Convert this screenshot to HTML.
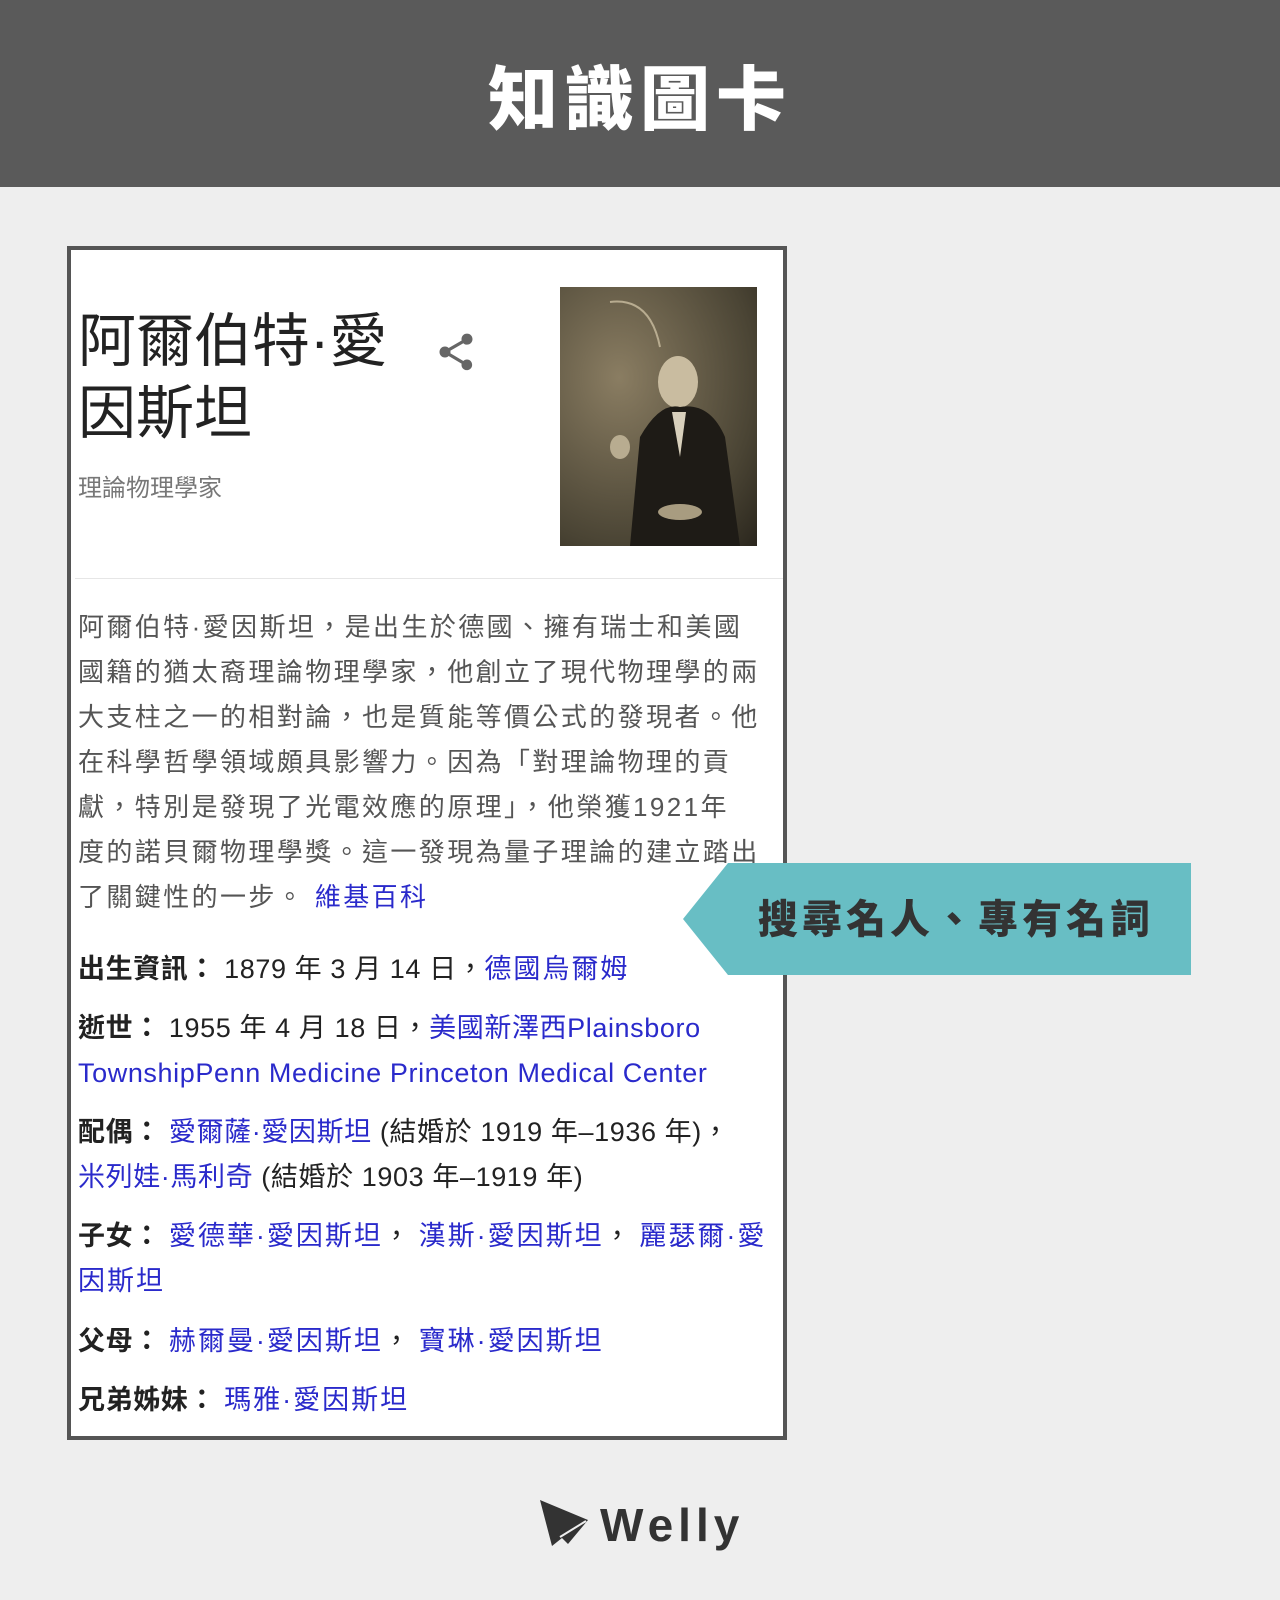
<!DOCTYPE html>
<html><head><meta charset="utf-8"><style>
body{margin:0;width:1280px;height:1600px;background:#eeeeee;position:relative;overflow:hidden;font-family:"Liberation Sans","Noto Sans CJK TC",sans-serif}
.hd{position:absolute;left:0;top:0;width:1280px;height:187px;background:#5a5a5a;color:#fff;font-weight:900;font-size:70px;text-align:center;line-height:200px;letter-spacing:6px}
.box{position:absolute;left:67px;top:246px;width:712px;height:1186px;background:#fff;border:4px solid #555}
.t{position:absolute;white-space:nowrap}
.title{left:7px;top:56px;font-size:58px;line-height:72px;color:#222}
.sub{left:7px;top:218px;font-size:24px;color:#777}
.sep{position:absolute;left:4px;right:0;top:328px;height:1px;background:#e6e6e6}
.p{font-size:26px;line-height:45px;color:#555;left:7px;letter-spacing:2.4px}
.f{font-size:27px;line-height:45px;color:#222;left:7px;letter-spacing:0.6px}
.c{letter-spacing:2px}
b{font-weight:bold;color:#222}
a{color:#2a2acb;text-decoration:none}
.photo{position:absolute;left:489px;top:37px;width:197px;height:259px;background:radial-gradient(ellipse at 30% 35%,#8a7d62,#4a4434 70%,#2a261d)}
</style></head><body>
<div class="hd">知識圖卡</div>
<div class="box">
<div class="t title">阿爾伯特·愛<br>因斯坦</div>
<svg style="position:absolute;left:363px;top:80px" width="44" height="44" viewBox="0 0 24 24"><path fill="#666" d="M18 16.1c-.8 0-1.5.3-2 .8l-7.1-4.2c.1-.2.1-.5.1-.7s0-.5-.1-.7L16 7.2c.5.5 1.2.8 2 .8 1.7 0 3-1.3 3-3s-1.3-3-3-3-3 1.3-3 3c0 .2 0 .5.1.7L8 9.8C7.5 9.3 6.8 9 6 9c-1.7 0-3 1.3-3 3s1.3 3 3 3c.8 0 1.5-.3 2-.8l7.1 4.2c-.1.2-.1.4-.1.6 0 1.6 1.3 2.9 2.9 2.9s2.9-1.3 2.9-2.9-1.2-2.9-2.8-2.9z"/></svg>
<div class="t sub">理論物理學家</div>
<div class="photo"><svg width="197" height="259"><path d="M50 15 Q90 10 100 60" stroke="#b8ac90" stroke-width="2" fill="none"/><ellipse cx="118" cy="95" rx="20" ry="26" fill="#c9bca0"/><path d="M70 259 L80 150 Q100 115 120 120 Q150 115 165 150 L180 259Z" fill="#1e1b16"/><path d="M112 125 L120 170 L126 125Z" fill="#d8d0bc"/><ellipse cx="60" cy="160" rx="10" ry="12" fill="#b8ac90"/><ellipse cx="120" cy="225" rx="22" ry="8" fill="#a89c80"/></svg></div>
<div class="sep"></div>
<div class="t p" style="top:355px">阿爾伯特·愛因斯坦，是出生於德國、擁有瑞士和美國<br>國籍的猶太裔理論物理學家，他創立了現代物理學的兩<br>大支柱之一的相對論，也是質能等價公式的發現者。他<br>在科學哲學領域頗具影響力。因為「對理論物理的貢<br>獻，特別是發現了光電效應的原理」，他榮獲1921年<br>度的諾貝爾物理學獎。這一發現為量子理論的建立踏出<br>了關鍵性的一步。 <a>維基百科</a></div>
<div class="t f" style="top:697px"><b>出生資訊：</b> 1879 年 3 月 14 日，<a class="c">德國烏爾姆</a></div>
<div class="t f" style="top:756px"><b>逝世：</b> 1955 年 4 月 18 日，<a>美國新澤西Plainsboro<br>TownshipPenn Medicine Princeton Medical Center</a></div>
<div class="t f" style="top:860px"><b>配偶：</b> <a>愛爾薩·愛因斯坦</a> (結婚於 1919 年–1936 年)，<br><a>米列娃·馬利奇</a> (結婚於 1903 年–1919 年)</div>
<div class="t f" style="top:964px"><b>子女：</b> <a class="c">愛德華·愛因斯坦</a>， <a class="c">漢斯·愛因斯坦</a>， <a class="c">麗瑟爾·愛</a><br><a class="c">因斯坦</a></div>
<div class="t f" style="top:1069px"><b>父母：</b> <a class="c">赫爾曼·愛因斯坦</a>， <a class="c">寶琳·愛因斯坦</a></div>
<div class="t f" style="top:1128px"><b>兄弟姊妹：</b> <a class="c">瑪雅·愛因斯坦</a></div>
</div>
<svg style="position:absolute;left:683px;top:863px" width="508" height="112"><polygon points="45,0 508,0 508,112 45,112 0,56" fill="#68bec4"/></svg>
<div class="t" style="left:758px;top:890px;font-size:40px;line-height:60px;font-weight:900;color:#333;letter-spacing:4px">搜尋名人、專有名詞</div>
<svg style="position:absolute;left:540px;top:1500px" width="50" height="48" viewBox="0 0 50 48"><polygon points="0,0 48,20 28,44 22,38 12,46" fill="#333"/><path d="M20 37 L46 21" stroke="#eee" stroke-width="2"/></svg>
<div class="t" style="left:600px;top:1497px;font-size:46px;line-height:56px;font-weight:bold;color:#333;letter-spacing:5px">Welly</div>
</body></html>
